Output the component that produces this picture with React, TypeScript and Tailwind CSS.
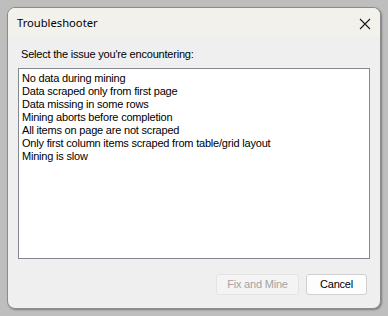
import React from "react";

const issues = [
  "No data during mining",
  "Data scraped only from first page",
  "Data missing in some rows",
  "Mining aborts before completion",
  "All items on page are not scraped",
  "Only first column items scraped from table/grid layout",
  "Mining is slow",
];

const App = () => {
  return (
    <div className="w-[388px] h-[316px] bg-[#bebebe] pt-[7px] pl-[7px]">
      <div className="w-[374px] h-[302px] flex flex-col rounded-[8px] border border-[#8c8c8c] bg-[#efefef] overflow-hidden shadow-[1px_1px_2px_rgba(0,0,0,0.35)]">
        {/* title bar */}
        <div className="h-[29px] shrink-0 flex items-center justify-between bg-[#f3f1ec] pl-[9px] pr-[9px]">
          <span className="mt-[2px] text-[11.2px] text-black font-['Noto_Sans',sans-serif]">
            Troubleshooter
          </span>
          <svg width="12" height="12" viewBox="0 0 12 12" className="mt-[2px]">
            <path d="M1 1L11 11M11 1L1 11" stroke="#1a1a1a" strokeWidth="1.1" />
          </svg>
        </div>

        <div className="flex-1 flex flex-col px-[10px] pb-[13px] font-['Liberation_Sans',Arial,sans-serif] text-[11px] tracking-[-0.2px] text-black">
          <p className="mt-[10px] ml-[3px] leading-[14px]">
            Select the issue you&apos;re encountering:
          </p>
          <div className="mt-[7px] h-[191px] border border-[#828790] bg-white px-[3px] pt-[3px]">
            {issues.map((item) => (
              <div key={item} className="leading-[13px] whitespace-nowrap">
                {item}
              </div>
            ))}
          </div>
          <div className="mt-auto mr-[3px] flex justify-end gap-[7px]">
            <button className="w-[83px] h-[21px] rounded-[3px] border border-[#e3e3e3] bg-[#f4f4f4] text-[#a3a3a3]">
              Fix and Mine
            </button>
            <button className="w-[61px] h-[21px] rounded-[3px] border border-[#d0d0d0] bg-[#fdfdfd] text-black">
              Cancel
            </button>
          </div>
        </div>
      </div>
    </div>
  );
};

export default App;
